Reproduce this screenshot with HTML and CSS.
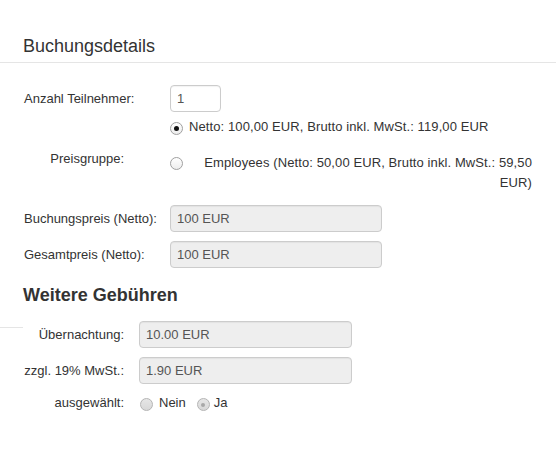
FILE: index.html
```html
<!DOCTYPE html>
<html lang="de">
<head>
<meta charset="utf-8">
<title>Buchungsdetails</title>
<link rel="stylesheet" href="styles.css">
</head>
<body>
<div class="panel">
  <div class="panel-head"><h1 class="title">Buchungsdetails</h1></div>

  <div class="details">
    <div class="row row-first">
      <label class="label">Anzahl Teilnehmer:</label>
      <div class="input input-small">1</div>
    </div>

    <div class="radio-line">
      <span class="radio checked"></span>
      <span class="radio-text">Netto: 100,00 EUR, Brutto inkl. MwSt.: 119,00 EUR</span>
    </div>

    <div class="group-row">
      <label class="label label-right">Preisgruppe:</label>
      <span class="radio radio-group2"></span>
      <span class="group-text">Employees (Netto: 50,00 EUR, Brutto inkl. MwSt.: 59,50 EUR)</span>
    </div>

    <div class="row row-price">
      <label class="label">Buchungspreis (Netto):</label>
      <div class="input input-readonly">100 EUR</div>
    </div>
    <div class="row row-gap">
      <label class="label">Gesamtpreis (Netto):</label>
      <div class="input input-readonly">100 EUR</div>
    </div>
  </div>

  <h2 class="subtitle">Weitere Gebühren</h2>

  <div class="fees">
    <div class="stub"></div>
    <div class="fees-form">
      <div class="frow">
        <label class="flabel">Übernachtung:</label>
        <div class="input input-readonly input-fee">10.00 EUR</div>
      </div>
      <div class="frow frow-gap">
        <label class="flabel">zzgl. 19% MwSt.:</label>
        <div class="input input-readonly input-fee">1.90 EUR</div>
      </div>
      <div class="frow frow-radio">
        <label class="flabel">ausgewählt:</label>
        <span class="radio disabled radio-nein"></span>
        <span class="opt">Nein</span>
        <span class="radio disabled checked radio-ja"></span>
        <span class="opt opt-ja">Ja</span>
      </div>
    </div>
  </div>
</div>
</body>
</html>
```

FILE: styles.css
```css
html, body {
  margin: 0;
  padding: 0;
  background: #fff;
}
body {
  font-family: "Liberation Sans", Arial, sans-serif;
  font-size: 13px;
  line-height: 20px;
  color: #333;
}
.panel-head {
  padding: 36px 0 6px 23px;
  border-bottom: 1px solid #e5e5e5;
}
.title {
  margin: 0;
  font-size: 18px;
  font-weight: normal;
  line-height: 20px;
  color: #333;
}
.details {
  padding-left: 24px;
}
.row {
  display: flex;
  align-items: center;
}
.row-first { margin-top: 22px; }
.row-price { margin-top: 12px; }
.row-gap { margin-top: 9px; }
.label {
  width: 146px;
  flex: none;
}
.input {
  box-sizing: border-box;
  height: 27px;
  line-height: 25px;
  padding: 0 6px;
  border: 1px solid #ccc;
  border-radius: 4px;
  color: #555;
  background: #fff;
  box-shadow: inset 0 1px 1px rgba(0,0,0,0.05);
}
.input-small { width: 51px; }
.input-readonly {
  width: 212px;
  background: #eee;
}
.radio-line {
  display: flex;
  align-items: flex-start;
  margin-top: 5px;
  padding-left: 146px;
}
.radio {
  box-sizing: border-box;
  flex: none;
  width: 13px;
  height: 13px;
  border-radius: 50%;
  border: 1px solid #a0a0a0;
  background: linear-gradient(#ffffff, #ededed);
  margin-top: 5px;
  display: inline-flex;
  align-items: center;
  justify-content: center;
}
.radio.checked::after {
  content: "";
  width: 5px;
  height: 5px;
  border-radius: 50%;
  background: #111;
}
.radio-text {
  margin-left: 6px;
  letter-spacing: 0.1px;
}
.group-row {
  display: flex;
  align-items: flex-start;
  margin-top: 12px;
}
.label-right {
  width: 100px;
  text-align: right;
}
.radio-group2 {
  margin-left: 46px;
  margin-top: 8px;
}
.group-text {
  width: 330px;
  margin-left: 19px;
  margin-top: 4px;
  text-align: right;
  letter-spacing: 0.1px;
}
.subtitle {
  margin: 17px 0 0 23px;
  font-size: 18px;
  line-height: 20px;
  font-weight: bold;
  color: #333;
}
.fees {
  display: flex;
  align-items: flex-start;
  margin-top: 16px;
}
.stub {
  width: 23px;
  flex: none;
  margin-top: 6px;
  border-top: 1px solid #e5e5e5;
}
.frow {
  display: flex;
  align-items: center;
}
.frow-gap { margin-top: 9px; }
.flabel {
  width: 101px;
  flex: none;
  text-align: right;
  margin-right: 15px;
}
.input-fee { width: 213px; }
.frow-radio {
  margin-top: 9px;
  align-items: flex-start;
}
.radio.disabled {
  border-color: #b4b4b4;
  background: linear-gradient(#e6e6e6, #d8d8d8);
}
.radio.disabled.checked::after {
  width: 4px;
  height: 4px;
  background: #a8a8a8;
}
.radio-nein { margin-left: 1px; }
.opt { margin-left: 6px; }
.radio-ja { margin-left: 11px; }
.opt-ja { margin-left: 4px; }
```
